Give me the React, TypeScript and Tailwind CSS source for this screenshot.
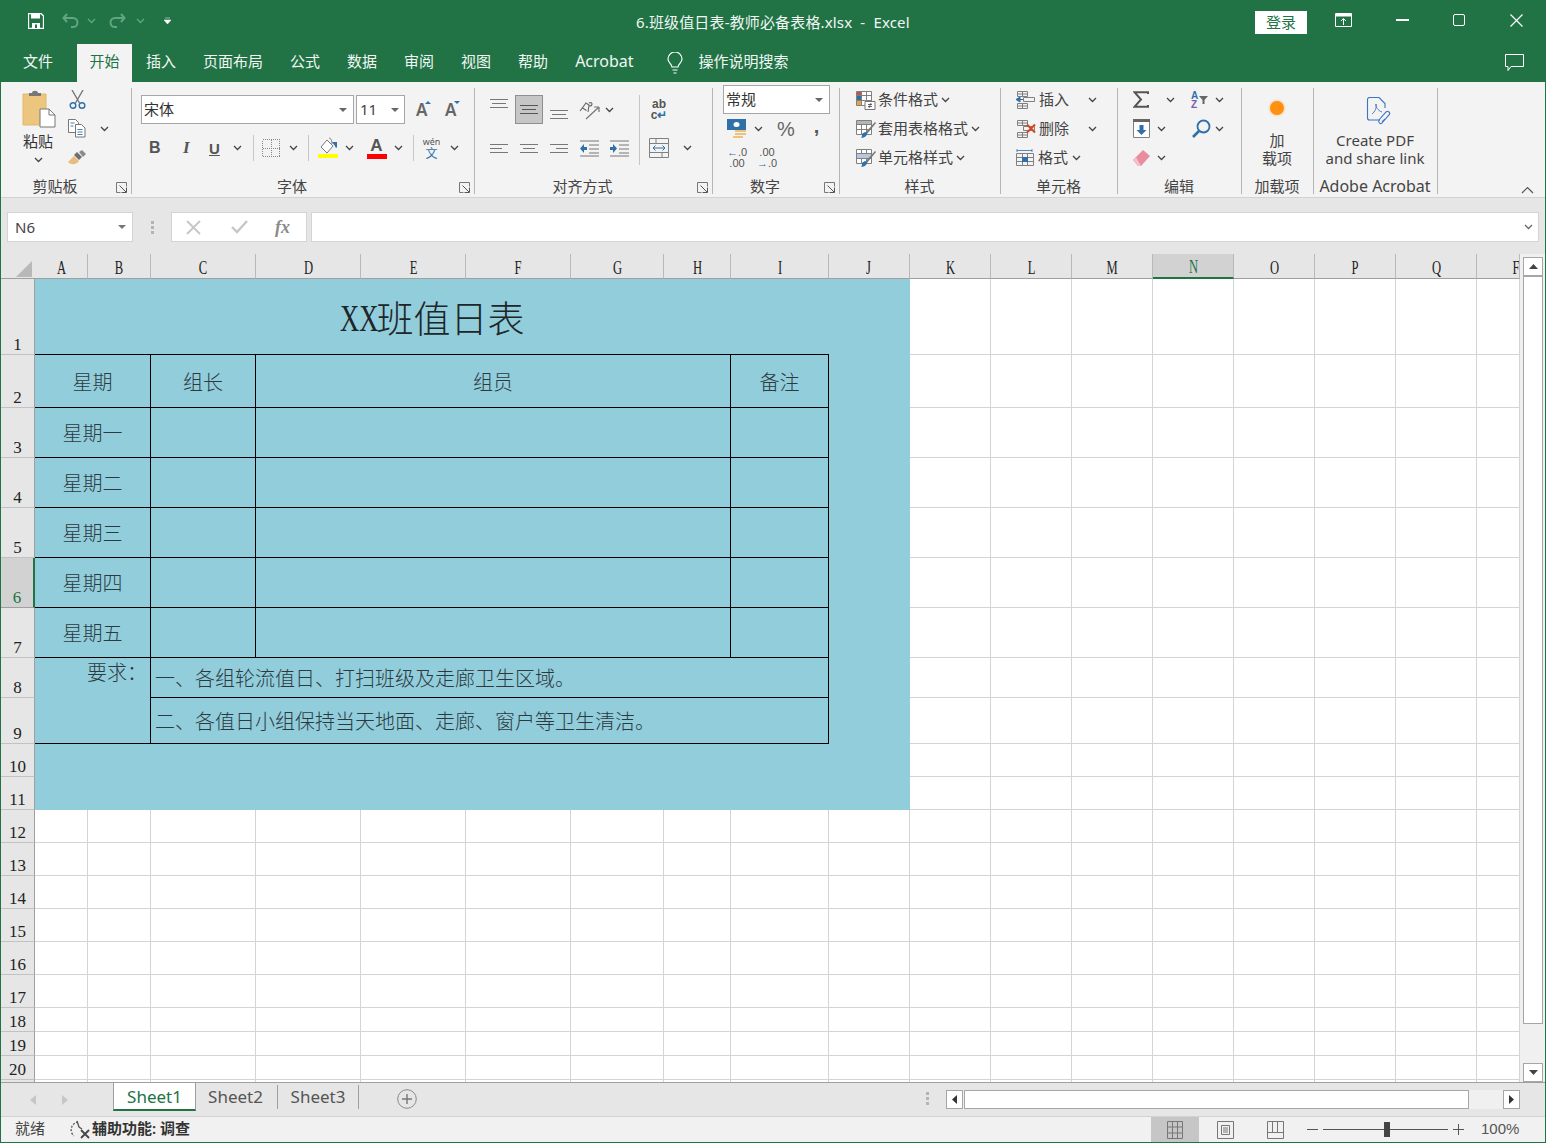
import type { ReactNode } from 'react'

const GREEN = '#217346'

const colWidths = [34, 53, 63, 105, 105, 105, 105, 93, 67, 98, 81, 81, 81, 81, 81, 81, 81, 81, 43]
const colNames = ['A', 'B', 'C', 'D', 'E', 'F', 'G', 'H', 'I', 'J', 'K', 'L', 'M', 'N', 'O', 'P', 'Q', 'F']
const rowHeights = [76, 53, 50, 50, 50, 50, 50, 40, 46, 33, 33, 33, 33, 33, 33, 33, 33, 24, 24, 24]

const sheetColumns = `${colWidths.join('px ')}px`
const sheetRows = `25px ${rowHeights.join('px ')}px 2px`

// ---- small drawings used in the ribbon ----

function Chevron({ color = '#444', className = '' }: { color?: string; className?: string }) {
  return (
    <svg width="9" height="6" viewBox="0 0 9 6" className={`shrink-0 ${className}`}>
      <path d="M1 1 L4.5 4.5 L8 1" fill="none" stroke={color} strokeWidth="1.3" />
    </svg>
  )
}

function Launcher() {
  return (
    <svg width="11" height="11" viewBox="0 0 11 11" className="mt-[2px] shrink-0">
      <path d="M10.5 4.5V.5H.5v10h4" fill="none" stroke="#777" />
      <path d="M3.5 3.5 L10 10 M10.5 5.5v5h-5" fill="none" stroke="#555" />
    </svg>
  )
}

function Lines({ widths, aligned = 'left', active }: { widths: number[]; aligned?: 'left' | 'center' | 'right'; active?: boolean }) {
  const align = aligned === 'left' ? 'items-start' : aligned === 'right' ? 'items-end' : 'items-center'
  return (
    <div className={`flex w-[18px] flex-col gap-[3px] ${align}`}>
      {widths.map((w, i) => (
        <div key={i} className={`h-px ${active ? 'bg-[#555]' : 'bg-[#777]'}`} style={{ width: w }} />
      ))}
    </div>
  )
}

function IndentIcon({ flip }: { flip?: boolean }) {
  return (
    <svg width="19" height="17" viewBox="0 0 19 17">
      <path d="M0 1h19M9 5h10M9 9h10M9 13h10M0 16h19" stroke="#777" fill="none" />
      {flip ? (
        <path d="M0 7h3V4l4 4.5-4 4.5v-3H0z" fill="#2f70a8" />
      ) : (
        <path d="M7 7H4V4L0 8.5 4 13v-3h3z" fill="#2f70a8" />
      )}
    </svg>
  )
}

function SheetStyleIcon({ kind }: { kind: 'cond' | 'table' | 'cell' }) {
  return (
    <svg width="22" height="20" viewBox="0 0 22 20">
      <path d="M1.5 1.5h15v14h-15zM1.5 5.5h15M1.5 10.5h15M6.5 1.5v14M11.5 1.5v14" fill="#fff" stroke="#808080" />
      {kind === 'cond' && (
        <>
          <path d="M2 2h4v3H2z" fill="#c8504b" />
          <path d="M2 6h4v4H2z" fill="#2f70a8" />
          <path d="M2 11h4v4H2z" fill="#e8a33d" />
          <path d="M10 11.5h10v8H10z" fill="#fff" stroke="#777" />
          <path d="M13 14.5h4M13 16.5h4M14 18l2-5" stroke="#444" fill="none" strokeWidth=".8" />
        </>
      )}
      {kind === 'table' && <path d="M2 2h14v3H2z" fill="#b5b5b5" />}
      {kind === 'cell' && <path d="M2 6h14v4H2z" fill="#b7c9de" />}
      {kind !== 'cond' && (
        <>
          <path d="M10 14 L20 3 L21 4 L12 15z" fill="#777" />
          <path d="M7 15c2-2 4-2 5-1 .5 2-2 5-6 5 1-1 1-2 1-4z" fill="#2f70a8" />
        </>
      )}
    </svg>
  )
}

function CellActionIcon({ kind }: { kind: 'insert' | 'delete' | 'format' }) {
  if (kind === 'format') {
    return (
      <svg width="19" height="20" viewBox="0 0 19 20">
        <path d="M1 1v3M16 1v3M1 2.500h15" stroke="#2f70a8" fill="none" strokeWidth=".8" />
        <path d="M.5 5.500h17v12h-17zM.5 9.500h17M.5 13.500h17M6.500 5.500v12M11.500 5.500v12" fill="none" stroke="#808080" />
        <path d="M6 9h6v5H6z" fill="#2f70a8" />
      </svg>
    )
  }
  return (
    <svg width="20" height="20" viewBox="0 0 20 20">
      <path d="M1.500 1.500h10v5h-10zM1.500 13.500h10v5h-10zM6.500 1.500v5M6.500 13.500v5M1.500 4h10M1.500 16h10" fill="none" stroke="#808080" />
      <path d="M7.500 7.500h11v4h-11z" fill="none" stroke="#808080" />
      {kind === 'insert' ? (
        <path d="M7 9.500H4V7L0 9.500 4 12V9.500" fill="#2f70a8" stroke="#2f70a8" />
      ) : (
        <path d="M11 5.500l8 8M19 5.500l-8 8" stroke="#d24726" strokeWidth="2" fill="none" />
      )}
    </svg>
  )
}

function RibbonLabel({ children, launcher }: { children: ReactNode; launcher?: boolean }) {
  return (
    <div className="flex h-[18px] shrink-0 items-center">
      <span className="flex-1 whitespace-nowrap text-center text-[15px] leading-[18px] text-[#444]">{children}</span>
      {launcher && (
        <span className="flex w-[21px] items-center pl-[7px]">
          <Launcher />
        </span>
      )}
    </div>
  )
}

function Group({ width, children, label, launcher }: { width: number; children: ReactNode; label: ReactNode; launcher?: boolean }) {
  return (
    <div className="flex h-[106px] shrink-0 flex-col border-r border-[#b5b5b5] pr-[1px]" style={{ width }}>
      <div className="h-[89px] shrink-0">{children}</div>
      <RibbonLabel launcher={launcher}>{label}</RibbonLabel>
    </div>
  )
}

function Ribbon() {
  return (
    <div className="flex h-[116px] border-b border-[#d2d2d2] bg-[#f3f3f3] pt-[6px] text-[15px] text-[#444]">
      <Group width={131} label="剪贴板" launcher>
        <div className="flex pl-[19px]">
          <div className="flex w-[36px] flex-col items-center">
            <svg width="36" height="38" viewBox="0 0 36 38" className="mt-[2px]">
              <path d="M3 4h23v31H3z" fill="#ecc57f" stroke="#e2b868" />
              <path d="M9 6V3h3c0-3 6-3 6 0h3v3z" fill="#777" />
              <path d="M20 19h9l6 6v12H20z" fill="#fff" stroke="#777" />
              <path d="M29 19v6h6" fill="none" stroke="#777" />
            </svg>
            <span className="mt-[3px] text-[15px] leading-[20px] text-[#333]">粘贴</span>
            <Chevron className="mt-[6px]" />
          </div>
          <div className="-mt-[3px] ml-[12px] flex flex-col">
            <div className="flex h-[29px] items-center pl-[1px]">
              <svg width="17" height="19" viewBox="0 0 17 19">
                <path d="M3 0l7.500 13M14 0L6.500 13" stroke="#777" strokeWidth="1.400" fill="none" />
                <circle cx="4" cy="15.500" r="2.800" fill="none" stroke="#2f70a8" strokeWidth="1.400" />
                <circle cx="13" cy="15.500" r="2.800" fill="none" stroke="#2f70a8" strokeWidth="1.400" />
              </svg>
            </div>
            <div className="flex h-[29px] items-center">
              <svg width="18" height="19" viewBox="0 0 18 19">
                <path d="M.5.500h7l3 3v10H.5z" fill="#fff" stroke="#777" />
                <path d="M7.500 5.500h6l3.500 3.500v9H7.500z" fill="#fff" stroke="#777" />
                <path d="M2.500 4h4M2.500 7h3M9.500 10.500h5M9.500 13h5M9.500 15.500h5" stroke="#2f70a8" fill="none" strokeWidth=".9" />
              </svg>
              <Chevron className="ml-[14px]" />
            </div>
            <div className="flex h-[29px] items-center">
              <svg width="18" height="16" viewBox="0 0 18 16">
                <path d="M0 12l6-6 5 5c-2 3-7 5-11 1z" fill="#e8bd7d" />
                <path d="M6 5l3-3 5 5-3 3z" fill="#6f6f6f" />
                <path d="M11 2l3-2 4 4-3 3z" fill="#8a8a8a" />
              </svg>
            </div>
          </div>
        </div>
      </Group>

      <Group width={343} label="字体" launcher>
        <div className="pl-[9px] pt-[7px]">
          <div className="flex items-center">
            <div className="flex h-[29px] w-[213px] items-center justify-between border border-[#a6a6a6] bg-white pl-[2px] pr-[6px]">
              <span className="text-[15px] text-[#333]">宋体</span>
              <svg width="8" height="4" viewBox="0 0 8 4"><path d="M0 0h8L4 4z" fill="#666" /></svg>
            </div>
            <div className="ml-[2px] flex h-[29px] w-[49px] items-center justify-between border border-[#a6a6a6] bg-white pl-[3px] pr-[5px]">
              <span className="text-[15px] text-[#444]">11</span>
              <svg width="8" height="4" viewBox="0 0 8 4"><path d="M0 0h8L4 4z" fill="#666" /></svg>
            </div>
            <span className="relative ml-[11px] w-[18px] text-[17px] font-semibold leading-[20px] text-[#666]">
              A
              <svg width="6" height="3" viewBox="0 0 6 3" className="absolute right-[3px] top-[1px]"><path d="M0 3h6L3 0z" fill="#2f70a8" /></svg>
            </span>
            <span className="relative ml-[11px] w-[18px] text-[17px] font-semibold leading-[20px] text-[#666]">
              A
              <svg width="6" height="3" viewBox="0 0 6 3" className="absolute right-[3px] top-[1px]"><path d="M0 0h6L3 3z" fill="#2f70a8" /></svg>
            </span>
          </div>
          <div className="mt-[10px] flex h-[28px] items-center pl-[8px]">
            <span className="w-[31px] font-['Liberation_Sans',sans-serif] text-[16px] font-bold text-[#555]">B</span>
            <span className="w-[29px] pl-[3px] font-['Liberation_Serif',serif] text-[17px] font-bold italic text-[#555]">I</span>
            <span className="w-[18px] font-['Liberation_Sans',sans-serif] text-[15px] font-bold leading-[15px] text-[#555] underline">U</span>
            <Chevron className="ml-[6px]" />
            <div className="ml-[11px] h-[26px] w-px bg-[#c6c6c6]" />
            <svg width="18" height="18" viewBox="0 0 18 18" className="ml-[8px]" shapeRendering="crispEdges">
              <path d="M.5.500h17v17H.5zM9 .5v17M.5 9h17" fill="none" stroke="#888" strokeDasharray="1 1" />
            </svg>
            <Chevron className="ml-[9px]" />
            <div className="ml-[10px] h-[26px] w-px bg-[#c6c6c6]" />
            <svg width="22" height="22" viewBox="0 0 22 22" className="ml-[8px]">
              <path d="M4 10l6-7 6 6-6 7z" fill="#fff" stroke="#777" />
              <path d="M12 1c2 0 3 3 3 6" fill="none" stroke="#777" />
              <path d="M15 5h5v5c0 1-2 1-2-1z" fill="#2f70a8" />
              <path d="M1 17h20v4H1z" fill="#ffff00" />
            </svg>
            <Chevron className="ml-[6px]" />
            <div className="ml-[12px] flex w-[21px] flex-col items-center">
              <span className="font-['Liberation_Sans',sans-serif] text-[17px] font-bold leading-[15px] text-[#555]">A</span>
              <div className="mt-[1px] h-[5px] w-[20px] bg-[#ff0000]" />
            </div>
            <Chevron className="ml-[7px]" />
            <div className="ml-[10px] h-[26px] w-px bg-[#c6c6c6]" />
            <div className="ml-[9px] flex w-[17px] flex-col items-center leading-none">
              <span className="text-[9px] leading-[10px] text-[#555]">wén</span>
              <span className="text-[12px] leading-[13px] text-[#2f70a8]">文</span>
            </div>
            <Chevron className="ml-[10px]" />
          </div>
        </div>
      </Group>

      <Group width={238} label="对齐方式" launcher>
        <div className="flex pl-[15px] pt-[7px]">
          <div className="flex flex-col">
            <div className="flex h-[29px] items-center">
              <div className="mb-[12px]"><Lines widths={[18, 14, 18]} aligned="center" /></div>
              <div className="ml-[7px] flex h-[29px] w-[28px] items-center justify-center border border-[#8f8f8f] bg-[#c6c6c6]">
                <Lines widths={[18, 14, 18]} aligned="center" active />
              </div>
              <div className="ml-[7px] mt-[10px]"><Lines widths={[18, 14, 18]} aligned="center" /></div>
              <svg width="22" height="22" viewBox="0 0 22 22" className="ml-[11px]">
                <path d="M7 20L20 8M20 8h-5M20 8v5" fill="none" stroke="#777" strokeWidth="1.200" />
                <path d="M1 12l6-8 3 2-1 7M3.500 9l4 2.500M10 4c2-1 3 0 3 1s-1 2-2.500 2" fill="none" stroke="#666" strokeWidth="1.100" />
              </svg>
              <Chevron className="ml-[4px]" />
            </div>
            <div className="mt-[10px] flex h-[28px] items-center">
              <Lines widths={[18, 12, 18]} />
              <div className="ml-[12px]"><Lines widths={[18, 12, 18]} aligned="center" /></div>
              <div className="ml-[12px]"><Lines widths={[18, 12, 18]} aligned="right" /></div>
              <div className="ml-[12px]"><IndentIcon /></div>
              <div className="ml-[11px]"><IndentIcon flip /></div>
            </div>
          </div>
          <div className="ml-[10px] h-[70px] w-px bg-[#c6c6c6]" />
          <div className="flex flex-col pl-[9px]">
            <div className="flex h-[29px] w-[20px] flex-col items-center justify-center font-['Liberation_Sans',sans-serif] text-[12px] font-semibold leading-[11px] text-[#555]">
              <span>ab</span>
              <span>c<span className="text-[#2f70a8]">↵</span></span>
            </div>
            <div className="mt-[10px] flex h-[28px] items-center">
              <svg width="20" height="20" viewBox="0 0 20 20" className="shrink-0">
                <path d="M.5.500h19v19H.5zM.5 5.500h19M.5 14.500h19M7 .5v5M13 14.500v5" fill="none" stroke="#808080" />
                <path d="M4 10h12M6.500 7.500L4 10l2.500 2.500M13.500 7.500L16 10l-2.500 2.500" fill="none" stroke="#2f70a8" />
              </svg>
              <Chevron className="ml-[14px]" />
            </div>
          </div>
        </div>
      </Group>

      <Group width={127} label="数字" launcher>
        <div className="-mt-[3px] pl-[10px]">
          <div className="flex h-[29px] w-[107px] items-center justify-between border border-[#a6a6a6] bg-white pl-[2px] pr-[6px] text-[#333]">
            <span className="text-[15px]">常规</span>
            <svg width="8" height="4" viewBox="0 0 8 4"><path d="M0 0h8L4 4z" fill="#666" /></svg>
          </div>
          <div className="flex h-[29px] items-center pl-[4px]">
            <svg width="20" height="20" viewBox="0 0 20 20" className="shrink-0">
              <path d="M0 0h19v11H0z" fill="#2f70a8" />
              <ellipse cx="9.500" cy="5.500" rx="3" ry="2.500" fill="#fff" />
              <path d="M8 11h11v2H8zM8 14h11v2H8zM6 17h10v2H6z" fill="#eec27a" />
            </svg>
            <Chevron className="ml-[7px]" />
            <span className="ml-[14px] font-['Liberation_Sans',sans-serif] text-[20px] leading-none text-[#666]">%</span>
            <span className="-mt-[5px] ml-[19px] font-['Liberation_Sans',sans-serif] text-[20px] font-bold leading-none text-[#555]">,</span>
          </div>
          <div className="flex h-[29px] items-center pl-[5px] font-['Liberation_Sans',sans-serif] text-[11px] leading-[11px] text-[#555]">
            <div className="flex w-[18px] flex-col items-center">
              <span><span className="font-bold text-[#2f70a8]">←</span>.0</span>
              <span>.00</span>
            </div>
            <div className="ml-[12px] flex w-[18px] flex-col items-center">
              <span>.00</span>
              <span><span className="font-bold text-[#2f70a8]">→</span>.0</span>
            </div>
          </div>
        </div>
      </Group>

      <Group width={161} label="样式">
        <div className="-mt-[3px] flex flex-col pl-[15px]">
          {([['cond', '条件格式'], ['table', '套用表格格式'], ['cell', '单元格样式']] as const).map(([kind, text]) => (
            <div key={kind} className="flex h-[29px] items-center">
              <SheetStyleIcon kind={kind} />
              <span className="ml-[1px] text-[15px]">{text}</span>
              <Chevron className="ml-[3px]" />
            </div>
          ))}
        </div>
      </Group>

      <Group width={117} label="单元格">
        <div className="-mt-[3px] flex flex-col pl-[15px]">
          {([['insert', '插入', 19], ['delete', '删除', 19], ['format', '格式', 4]] as const).map(([kind, text, gap]) => (
            <div key={kind} className="flex h-[29px] items-center">
              <CellActionIcon kind={kind} />
              <span className="ml-[3px] text-[15px]">{text}</span>
              <div className="flex" style={{ marginLeft: gap }}>
                <Chevron />
              </div>
            </div>
          ))}
        </div>
      </Group>

      <Group width={124} label="编辑">
        <div className="-mt-[3px] flex flex-col pl-[15px]">
          <div className="flex h-[29px] items-center">
            <svg width="16" height="17" viewBox="0 0 16 17" className="shrink-0">
              <path d="M15 3V1.200H1.500L8 8.500 1.500 15.800H15V14" fill="none" stroke="#555" strokeWidth="2" />
            </svg>
            <Chevron className="ml-[17px]" />
            <div className="ml-[16px] flex w-[18px] items-center">
              <div className="flex flex-col font-['Liberation_Sans',sans-serif] text-[10px] font-bold leading-[9px]">
                <span className="text-[#2f70a8]">A</span>
                <span className="text-[#7a5fb0]">Z</span>
              </div>
              <svg width="9" height="8" viewBox="0 0 9 8" className="ml-[1px]"><path d="M0 0h9L5.500 4v4h-2V4z" fill="#666" /></svg>
            </div>
            <Chevron className="ml-[6px]" />
          </div>
          <div className="flex h-[29px] items-center">
            <svg width="17" height="19" viewBox="0 0 17 19" className="shrink-0">
              <path d="M.5 1.500h16v17H.5z" fill="#fff" stroke="#808080" />
              <path d="M0 0h17v3H0z" fill="#666" />
              <path d="M6.500 6h4v5h3L8.500 16 3.500 11h3z" fill="#2f70a8" />
            </svg>
            <Chevron className="ml-[7px]" />
            <svg width="19" height="19" viewBox="0 0 19 19" className="ml-[26px] shrink-0">
              <circle cx="11.500" cy="7.500" r="6" fill="none" stroke="#2f70a8" strokeWidth="1.800" />
              <path d="M7 12l-6 6" stroke="#2f70a8" strokeWidth="2.600" />
            </svg>
            <Chevron className="ml-[4px]" />
          </div>
          <div className="flex h-[29px] items-center">
            <svg width="17" height="16" viewBox="0 0 17 16" className="shrink-0">
              <path d="M0 10l10-10 7 6-9 10H5z" fill="#e88ca0" />
              <path d="M0 10l5 6h3L3 7z" fill="#f3c0cb" />
            </svg>
            <Chevron className="ml-[7px]" />
          </div>
        </div>
      </Group>

      <Group width={72} label="加载项">
        <div className="flex flex-col items-center pt-[13px]">
          <div className="h-[14px] w-[14px] rounded-full bg-[#ff9012] shadow-[0_0_3px_#ffb765]" />
          <span className="mt-[16px] text-[15px] leading-[18px]">加</span>
          <span className="text-[15px] leading-[18px]">载项</span>
        </div>
      </Group>

      <Group width={124} label={<span className="text-[16px]">Adobe Acrobat</span>}>
        <div className="flex flex-col items-center pt-[9px]">
          <svg width="26" height="30" viewBox="0 0 26 30" className="ml-[8px]">
            <path d="M14 23H3.500a2 2 0 0 1-2-2V2.500a2 2 0 0 1 2-2H13l6 6V11" fill="none" stroke="#3f73c4" strokeWidth="1.100" />
            <path d="M6 17c3-2 5-7 4-10-1 2 2 7 6 8" fill="none" stroke="#3f73c4" strokeWidth=".9" />
            <path d="M16 26l7-8c2-2-1-5-3-3l-7 8c-1 2 1 5 3 3zM19 22l-3 3" fill="none" stroke="#3f73c4" strokeWidth="1.100" />
          </svg>
          <span className="mt-[4px] text-[15px] leading-[18px]">Create PDF</span>
          <span className="text-[15px] leading-[18px]">and share link</span>
        </div>
      </Group>

      <div className="flex h-[106px] flex-1 items-end justify-end pr-[11px]">
        <svg width="13" height="8" viewBox="0 0 13 8"><path d="M1 7l5.500-5.500L12 7" fill="none" stroke="#555" strokeWidth="1.200" /></svg>
      </div>
    </div>
  )
}

function FormulaBar() {
  return (
    <div className="flex h-[56px] items-start bg-[#e6e6e6] pl-[6px] pr-[6px] pt-[14px]">
      <div className="flex h-[30px] w-[126px] items-center justify-between border border-[#d4d4d4] bg-white pl-[7px] pr-[6px] text-[15px] text-[#444]">
        N6
        <svg width="8" height="4" viewBox="0 0 8 4"><path d="M0 0h8L4 4z" fill="#777" /></svg>
      </div>
      <div className="flex h-[30px] w-[38px] flex-col items-center justify-center gap-[2px]">
        <div className="h-[3px] w-[3px] bg-[#b4b4b4]" />
        <div className="h-[3px] w-[3px] bg-[#b4b4b4]" />
        <div className="h-[3px] w-[3px] bg-[#b4b4b4]" />
      </div>
      <div className="flex h-[30px] w-[136px] items-center border border-[#d4d4d4] bg-white pl-[14px]">
        <svg width="15" height="15" viewBox="0 0 15 15"><path d="M1 1l13 13M14 1L1 14" stroke="#c6c6c6" strokeWidth="1.800" /></svg>
        <svg width="17" height="14" viewBox="0 0 17 14" className="ml-[30px]"><path d="M1 7l5 5L16 1" fill="none" stroke="#c6c6c6" strokeWidth="2.400" /></svg>
        <span className="ml-[27px] font-['Liberation_Serif',serif] text-[18px] font-bold italic leading-none text-[#8a8a8a]">fx</span>
      </div>
      <div className="ml-[4px] flex h-[30px] flex-1 items-center justify-end border border-[#d4d4d4] bg-white pr-[5px]">
        <Chevron color="#666" />
      </div>
    </div>
  )
}

type CellDef = { span?: number; rows?: number; text?: ReactNode; cls?: string }

const cjk = "font-['Liberation_Serif','Noto_Sans_CJK_SC',serif] text-[20px] font-light text-[#2c3a3f]"
const line = 'border-r border-b border-black'
const fill = 'bg-[#92cddc]'

// columns A..J of the filled block, row by row; empty cells take the fill
const blueRows: CellDef[][] = [
  [
    {
      span: 9,
      cls: `${fill} border-b border-black items-center justify-center pt-[4px]`,
      text: (
        <span className="flex items-center text-[37px] font-light text-[#1d2628]">
          <span className="inline-block w-[37px] origin-left scale-x-[0.72] font-['Liberation_Serif',serif]">XX</span>
          班值日表
        </span>
      ),
    },
    { cls: fill },
  ],
  [
    { span: 2, text: '星期', cls: `${fill} ${line} ${cjk} items-center justify-center pt-[4px]` },
    { text: '组长', cls: `${fill} ${line} ${cjk} items-center justify-center pt-[4px]` },
    { span: 5, text: '组员', cls: `${fill} ${line} ${cjk} items-center justify-center pt-[4px]` },
    { text: '备注', cls: `${fill} ${line} ${cjk} items-center justify-center pt-[4px]` },
    { cls: fill },
  ],
  ...['星期一', '星期二', '星期三', '星期四', '星期五'].map((day) => [
    { span: 2, text: day, cls: `${fill} ${line} ${cjk} items-center justify-center pt-[2px]` },
    { cls: `${fill} ${line}` },
    { span: 5, cls: `${fill} ${line}` },
    { cls: `${fill} ${line}` },
    { cls: fill },
  ]),
  [
    { span: 2, rows: 2, text: '要求：', cls: `${fill} ${line} ${cjk} items-start justify-end pr-[3px]` },
    { span: 7, text: '一、各组轮流值日、打扫班级及走廊卫生区域。', cls: `${fill} ${line} ${cjk} items-center pl-[4px] pt-[2px]` },
    { cls: fill },
  ],
  [
    { span: 7, text: '二、各值日小组保持当天地面、走廊、窗户等卫生清洁。', cls: `${fill} ${line} ${cjk} items-center pl-[4px] pt-[2px]` },
    { cls: fill },
  ],
  [{ span: 10, cls: fill }],
  [{ span: 10, cls: fill }],
]

function Sheet() {
  const plain = 'border-r border-b border-[#d4d4d4] bg-white'
  return (
    <div className="grid flex-1 overflow-hidden" style={{ gridTemplateColumns: sheetColumns, gridTemplateRows: sheetRows }}>
      {/* header row */}
      <div className="flex items-end justify-end border-b border-[#9f9f9f] bg-[#e6e6e6] pb-[1px] pr-[3px]">
        <svg width="16" height="16" viewBox="0 0 16 16"><path d="M16 0v16H0z" fill="#b8b8b8" /></svg>
      </div>
      {colNames.map((name, i) => {
        const selected = i === 13
        const clipped = i === 17
        return (
          <div
            key={i}
            className={`flex items-end overflow-hidden ${clipped ? 'justify-start pl-[34px]' : 'justify-center'} ${selected ? 'border-b-2 border-r border-b-[#217346] border-r-[#b9b9b9] bg-[#d2d2d2] text-[#217346]' : 'border-b border-r border-b-[#9f9f9f] border-r-[#b9b9b9] bg-[#e6e6e6] text-[#222]'} font-['Liberation_Serif',serif] text-[18px] leading-[19px]`}
          >
            <span className="inline-block scale-x-[0.7]">{name}</span>
          </div>
        )
      })}
      {rowHeights.map((_, r) => {
        const selected = r === 5
        const cells: ReactNode[] = []
        if (r < blueRows.length) {
          blueRows[r].forEach((c, i) => {
            cells.push(
              <div
                key={`c${r}-${i}`}
                className={`flex whitespace-nowrap ${c.cls ?? ''}`}
                style={{ gridColumn: `span ${c.span ?? 1}`, gridRow: `span ${c.rows ?? 1}` }}
              >
                {c.text}
              </div>,
            )
          })
        }
        const start = r < blueRows.length ? 11 : 1
        for (let c = start; c <= 18; c++) {
          cells.push(<div key={`p${r}-${c}`} className={plain} />)
        }
        return (
          <div key={r} className="contents">
            <div
              className={`flex items-end justify-center border-b font-['Liberation_Serif',serif] text-[17px] leading-[18px] ${selected ? 'border-r-2 border-b-[#9f9f9f] border-r-[#217346] bg-[#d2d2d2] text-[#217346]' : 'border-r border-b-[#c2c2c2] border-r-[#9f9f9f] bg-[#e6e6e6] text-[#222]'}`}
            >
              {r + 1}
            </div>
            {cells}
          </div>
        )
      })}
      <div className="border-r border-[#9f9f9f] bg-[#e6e6e6]" />
      {colNames.map((_, i) => (
        <div key={i} className="border-r border-[#d4d4d4] bg-white" />
      ))}
    </div>
  )
}

function VerticalScroll() {
  return (
    <div className="flex w-[25px] flex-col bg-[#f0f0f0] pl-[3px] pr-[2px] pt-[3px]">
      <div className="flex h-[19px] items-center justify-center border border-[#a6a6a6] bg-white">
        <svg width="9" height="5" viewBox="0 0 9 5"><path d="M0 5h9L4.500 0z" fill="#444" /></svg>
      </div>
      <div className="h-[748px] border border-[#a6a6a6] bg-white" />
      <div className="flex-1" />
      <div className="flex h-[19px] items-center justify-center border border-[#a6a6a6] bg-white">
        <svg width="9" height="5" viewBox="0 0 9 5"><path d="M0 0h9L4.500 5z" fill="#444" /></svg>
      </div>
    </div>
  )
}

function SheetTabs() {
  return (
    <div className="flex h-[34px] border-t border-[#9f9f9f] bg-[#e6e6e6] text-[17px] text-[#555]">
      <div className="flex w-[112px] items-center pl-[29px]">
        <svg width="6" height="10" viewBox="0 0 6 10"><path d="M6 0v10L0 5z" fill="#c6c6c6" /></svg>
        <svg width="6" height="10" viewBox="0 0 6 10" className="ml-[26px]"><path d="M0 0v10l6-5z" fill="#c6c6c6" /></svg>
      </div>
      <div className="flex h-[28px] w-[83px] items-center justify-center border-x border-b-2 border-x-[#9f9f9f] border-b-[#217346] bg-white pt-[1px] text-[#217346]">Sheet1</div>
      <div className="mt-[2px] flex h-[24px] w-[82px] items-center justify-center border-r border-[#9f9f9f] pr-[2px]">Sheet2</div>
      <div className="mt-[2px] flex h-[24px] w-[81px] items-center justify-center border-r border-[#9f9f9f]">Sheet3</div>
      <svg width="20" height="20" viewBox="0 0 20 20" className="ml-[38px] mt-[6px]">
        <circle cx="10" cy="10" r="9.300" fill="none" stroke="#888" />
        <path d="M5 10h10M10 5v10" stroke="#777" strokeWidth="1.400" />
      </svg>
      <div className="ml-[509px] mt-[9px] flex flex-col gap-[2px]">
        <div className="h-[3px] w-[3px] bg-[#b4b4b4]" />
        <div className="h-[3px] w-[3px] bg-[#b4b4b4]" />
        <div className="h-[3px] w-[3px] bg-[#b4b4b4]" />
      </div>
      <div className="ml-[17px] mt-[7px] flex h-[19px] w-[574px] bg-[#f0f0f0]">
        <div className="flex w-[17px] items-center justify-center border border-[#a6a6a6] bg-white">
          <svg width="5" height="9" viewBox="0 0 5 9"><path d="M5 0v9L0 4.500z" fill="#333" /></svg>
        </div>
        <div className="ml-[1px] w-[505px] border border-[#a6a6a6] bg-white" />
        <div className="flex-1" />
        <div className="flex w-[17px] items-center justify-center border border-[#a6a6a6] bg-white">
          <svg width="5" height="9" viewBox="0 0 5 9"><path d="M0 0v9l5-4.500z" fill="#333" /></svg>
        </div>
      </div>
    </div>
  )
}

function StatusBar() {
  return (
    <div className="flex h-[26px] items-center whitespace-nowrap border-t border-[#d2d2d2] bg-[#f1f1f1] text-[15px] text-[#444]">
      <span className="-mt-[2px] ml-[14px]">就绪</span>
      <svg width="21" height="20" viewBox="0 0 21 20" className="ml-[25px]">
        <path d="M8 2a8 8 0 0 0-4 14" fill="none" stroke="#555" strokeDasharray="2 1.500" strokeWidth="1.300" />
        <path d="M7 1l2 6 3 2" fill="none" stroke="#555" strokeWidth="1.300" />
        <path d="M11 10l8 8M19 10l-8 8" stroke="#444" strokeWidth="1.800" />
      </svg>
      <span className="-mt-[2px] ml-[1px] w-[98px] font-semibold text-[#333]">辅助功能: 调查</span>
      <div className="ml-[961px] flex h-[25px] w-[48px] items-center justify-center bg-[#c6c6c6]">
        <svg width="16" height="18" viewBox="0 0 16 18"><path d="M.5.500h15v17H.5zM.5 6h15M.5 12h15M5.500.5v17M10.500.5v17" fill="none" stroke="#777" /></svg>
      </div>
      <div className="flex w-[52px] justify-center">
        <svg width="17" height="18" viewBox="0 0 17 18">
          <path d="M.5.500h16v17H.5z" fill="none" stroke="#777" />
          <path d="M4.500 4.500h8v9h-8zM6 7h5M6 9h5M6 11h5" fill="none" stroke="#777" />
        </svg>
      </div>
      <div className="flex w-[48px] justify-center">
        <svg width="17" height="18" viewBox="0 0 17 18"><path d="M.5.500h16v17H.5zM.5 11.500h16M5.500.5v11M10.500.5v11" fill="none" stroke="#777" /></svg>
      </div>
      <div className="ml-[8px] h-px w-[11px] bg-[#555]" />
      <div className="relative ml-[5px] h-px w-[125px] bg-[#555]">
        <div className="absolute left-[61px] top-[-7px] h-[15px] w-[6px] bg-[#444]" />
      </div>
      <svg width="11" height="11" viewBox="0 0 11 11" className="ml-[5px]"><path d="M0 5.500h11M5.500 0v11" stroke="#555" /></svg>
      <span className="ml-[17px] font-['Liberation_Sans',sans-serif] text-[15px] text-[#555]">100%</span>
    </div>
  )
}

export default function App() {
  return (
    <div className="flex h-[1143px] w-[1546px] flex-col overflow-hidden border-x border-b border-[#217346] bg-white font-['Noto_Sans','Noto_Sans_CJK_SC',sans-serif]">
      {/* title bar */}
      <div className="flex h-[41px] items-center text-white" style={{ backgroundColor: GREEN }}>
        <svg width="16" height="16" viewBox="0 0 16 16" className="ml-[27px]">
          <path d="M.5.500h12.500l2.500 2.500v12.500H.5z" fill="none" stroke="#fff" strokeWidth="1.300" />
          <path d="M3 1h9v4.500H3z" fill="#fff" />
          <path d="M4 10h8v5.500H4z" fill="#fff" />
          <path d="M7 11.500h2V15H7z" fill="#217346" />
        </svg>
        <svg width="18" height="15" viewBox="0 0 18 15" className="ml-[18px]">
          <path d="M5 1L1.500 5 5 9M2 5h9a4 4 0 0 1 0 9H9" fill="none" stroke="#61a581" strokeWidth="2" />
        </svg>
        <Chevron color="#61a581" className="ml-[7px]" />
        <svg width="18" height="15" viewBox="0 0 18 15" className="ml-[12px]">
          <path d="M13 1l3.500 4L13 9M16 5H7a4 4 0 0 0 0 9h2" fill="none" stroke="#61a581" strokeWidth="2" />
        </svg>
        <Chevron color="#61a581" className="ml-[10px]" />
        <svg width="7" height="8" viewBox="0 0 7 8" className="ml-[19px]">
          <path d="M1 1h5M0 3h7L3.500 7z" fill="#fff" stroke="#fff" strokeWidth=".5" />
        </svg>
        <span className="ml-[465px] mt-[3px] whitespace-pre text-[15px] tracking-[0.15px] text-[#f2f7f4]">6.班级值日表-教师必备表格.xlsx  -  Excel</span>
        <div className="ml-auto flex items-center">
          <div className="mt-[4px] flex h-[23px] w-[52px] items-center justify-center bg-white text-[15px] text-[#217346]">登录</div>
          <svg width="17" height="14" viewBox="0 0 17 14" className="mb-[1px] ml-[28px]">
            <path d="M.5.500h16v13H.5z" fill="none" stroke="#fff" />
            <path d="M1 1h15v2.500H1z" fill="#fff" />
            <path d="M8.500 12V6M6 8l2.500-2.500L11 8" fill="none" stroke="#fff" />
          </svg>
          <div className="mb-[1px] ml-[44px] h-[1.500px] w-[13px] bg-white" />
          <div className="mb-[1px] ml-[44px] h-[12px] w-[12px] rounded-[2px] border border-white" />
          <svg width="13" height="13" viewBox="0 0 13 13" className="mb-[1px] ml-[45px] mr-[22px]">
            <path d="M.5.500l12 12M12.500.5l-12 12" stroke="#fff" strokeWidth="1.200" />
          </svg>
        </div>
      </div>

      {/* tab strip */}
      <div className="flex h-[41px] items-end whitespace-nowrap text-[15px] text-[#f2f7f4]" style={{ backgroundColor: GREEN }}>
        <span className="mb-[10px] ml-[22px]">文件</span>
        <span className="ml-[24px] flex h-[38px] w-[55px] items-center justify-center bg-[#f3f3f3] pb-[3px] text-[#217346]">开始</span>
        {[['插入', 14], ['页面布局', 27], ['公式', 27], ['数据', 27], ['审阅', 27], ['视图', 27], ['帮助', 27]].map(([t, m]) => (
          <span key={t} className="mb-[10px]" style={{ marginLeft: Number(m) }}>{t}</span>
        ))}
        <span className="mb-[10px] ml-[27px] text-[16px] leading-[22px]">Acrobat</span>
        <svg width="16" height="22" viewBox="0 0 16 22" className="mb-[8px] ml-[33px]">
          <path d="M5 15c0-3-4-4-4-8a7 7 0 0 1 14 0c0 4-4 5-4 8zM5.500 18h5M6.500 21h3" fill="none" stroke="#fff" strokeWidth="1.200" />
        </svg>
        <span className="mb-[10px] ml-[16px]">操作说明搜索</span>
        <svg width="20" height="18" viewBox="0 0 20 18" className="mb-[10px] ml-auto mr-[20px]">
          <path d="M.5.500h18v12H6l-3 4v-4H.5z" fill="none" stroke="#fff" />
        </svg>
      </div>

      <Ribbon />
      <FormulaBar />

      <div className="flex flex-1 overflow-hidden">
        <Sheet />
        <VerticalScroll />
      </div>

      <SheetTabs />
      <StatusBar />
    </div>
  )
}
